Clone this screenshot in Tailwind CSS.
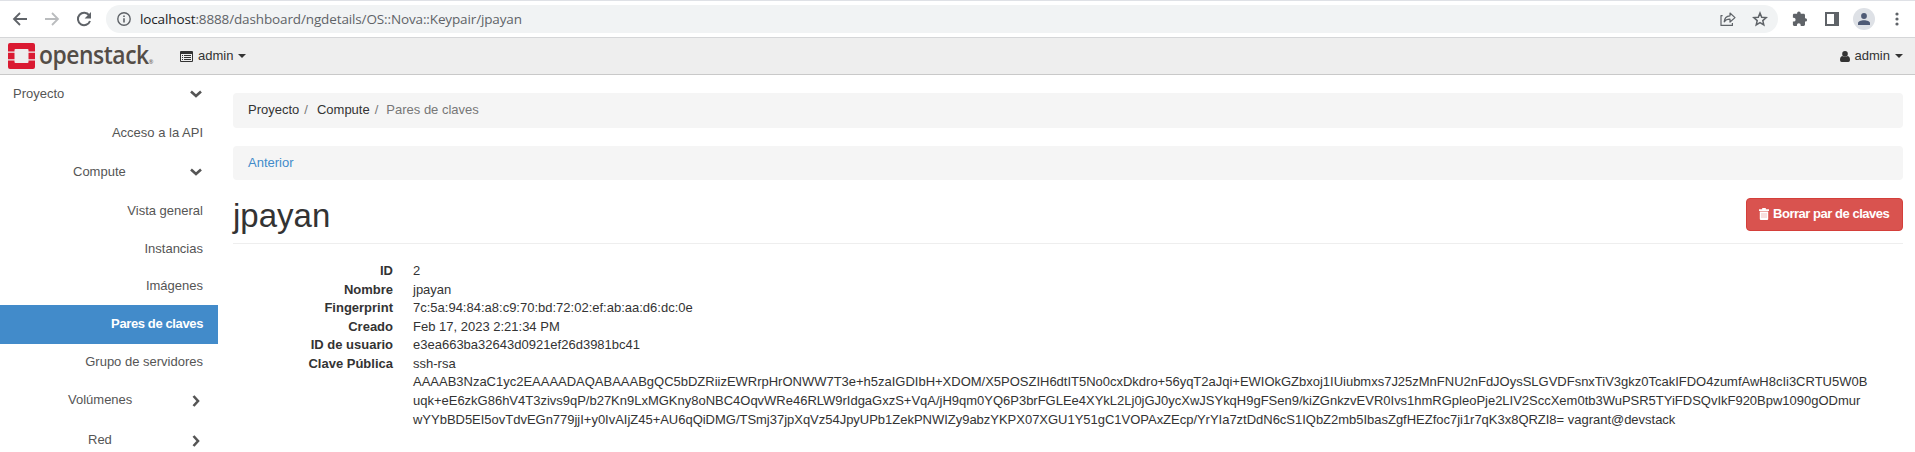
<!DOCTYPE html>
<html lang="es">
<head>
<meta charset="utf-8">
<title>jpayan - OpenStack Dashboard</title>
<script src="https://cdn.jsdelivr.net/npm/@tailwindcss/browser@4"></script>
</head>
<body class="h-[452px] w-[1915px] overflow-hidden bg-white font-['Liberation_Sans',Arial,sans-serif] text-[13px] leading-[18.57px] text-[#333]">
<div class="flex h-[38px] items-center border-t border-b border-t-[#dfe1e6] border-b-[#d5d6d8] bg-white text-[#5f6368]">
  <svg class="ml-3 size-4 shrink-0" viewBox="0 0 16 16" fill="none" stroke="currentColor" stroke-width="1.8"><path d="M15 8H2M8 2L2 8l6 6"/></svg>
  <svg class="ml-4 size-4 shrink-0 text-[#babcbe]" viewBox="0 0 16 16" fill="none" stroke="currentColor" stroke-width="1.8"><path d="M1 8h13M8 2l6 6-6 6"/></svg>
  <svg class="ml-4 size-4 shrink-0" viewBox="0 0 16 16"><path d="M13.2 4.4A6.2 6.2 0 1 0 14 10" fill="none" stroke="currentColor" stroke-width="2"/><path d="M15 1v6.4H8.6z" fill="currentColor"/></svg>
  <div class="ml-[14px] flex h-7 w-[1672px] shrink-0 items-center rounded-full bg-[#f1f3f4]">
    <svg class="ml-[11px] size-[14px]" viewBox="0 0 14 14"><circle cx="7" cy="7" r="6.2" fill="none" stroke="currentColor" stroke-width="1.4"/><path d="M6.2 6.2h1.6v4.3H6.2zM6.2 3.4h1.6V5H6.2z" fill="currentColor"/></svg>
    <span class="ml-[9px] font-['Open_Sans',sans-serif] text-[13.5px] tracking-[-0.13px] whitespace-nowrap"><span class="text-[#202124]">localhost</span>:8888/dashboard/ngdetails/OS::Nova::Keypair/jpayan</span>
    <svg class="mr-[16px] ml-auto h-4 w-4" viewBox="0 0 16 16" fill="none" stroke="currentColor" stroke-width="1.2" stroke-linejoin="round"><path d="M2.6 4.600H1V14.400h11.400V12"/><path d="M4.2 10.8C4.5 7 6.5 5 10 4.8V2l5 4.6-5 4.400V8.200C7.300 8.100 5.500 9 4.200 10.800z"/></svg>
    <svg class="mr-[10px] h-4 w-4" viewBox="0 0 16 16" fill="none" stroke="currentColor" stroke-width="1.5"><path d="M8 2l1.700 4.200 4.500.4-3.400 3 1 4.400L8 11.700l-3.800 2.300 1-4.400-3.400-3 4.500-.4z"/></svg>
  </div>
  <svg class="ml-[14px] size-4 shrink-0" viewBox="0 0 16 16" fill="currentColor"><path d="M13.4 7.2h-.4V4.200c0-.8-.6-1.400-1.400-1.400H8.700V2.200a1.800 1.800 0 0 0-3.600 0v.6H2.200C1.400 2.800.9 3.400.9 4.200v2.600h.8a1.900 1.900 0 0 1 0 3.800H.9v3c0 .8.5 1.400 1.300 1.400h2.700v-.9a1.900 1.900 0 0 1 3.800 0v.9h2.900c.8 0 1.400-.6 1.400-1.400v-3h.4a1.700 1.700 0 0 0 0-3.400z"/></svg>
  <svg class="ml-[17px] h-[14px] w-[14px] shrink-0" viewBox="0 0 14 14"><path fill="currentColor" fill-rule="evenodd" d="M0 0h14v14H0zM2 2v10h7V2z"/></svg>
  <span class="ml-[14px] flex size-[22px] shrink-0 items-center justify-center rounded-full bg-[#dee1e6] text-[#4f5b76]"><svg class="size-3" viewBox="0 0 12 12" fill="currentColor"><circle cx="6" cy="3" r="2.900"/><path d="M0 12V10.200C0 8.300 3 7.300 6 7.300s6 1 6 2.900V12z"/></svg></span>
  <svg class="ml-5 h-[14px] w-[4px] shrink-0" viewBox="0 0 4 14" fill="currentColor"><circle cx="2" cy="2" r="1.600"/><circle cx="2" cy="7" r="1.600"/><circle cx="2" cy="12" r="1.600"/></svg>
</div>
<header class="flex h-[37px] items-center border-b border-[#c9c9c9] bg-[#eee]">
  <svg class="ml-2 h-[26px] w-[27px] shrink-0" viewBox="0 0 27 26" fill="#da1a32"><path d="M2 0H25Q27 0 27 2V8.500H20.500V7Q20.500 6 19.500 6H7.500Q6.500 6 6.500 7V8.500H0V2Q0 0 2 0zM0 17.500H6.500V19Q6.500 20 7.500 20H19.500Q20.500 20 20.500 19V17.500H27V24Q27 26 25 26H2Q0 26 0 24zM0 9.800H6.500V16.200H0zM20.500 9.800H27V16.200H20.500z"/></svg>
  <div class="ml-1 h-[37px] w-[121px] shrink-0"><span class="inline-block origin-left scale-x-[0.915] font-['Open_Sans',sans-serif] text-[25px] leading-[33px] font-semibold tracking-[-0.5px] whitespace-nowrap text-[#544d47]">openstack<span class="text-[6px] font-normal">®</span></span></div>
  <svg class="ml-5 h-[11px] w-[13px] shrink-0" viewBox="0 0 13 11"><path fill="#333" fill-rule="evenodd" d="M1 0h11q1 0 1 1v9q0 1-1 1H1q-1 0-1-1V1q0-1 1-1zM1 3v7h11V3zM2 4h1v1H2zM4 4h7v1H4zM2 6h1v1H2zM4 6h7v1H4zM2 8h1v1H2zM4 8h7v1H4z"/></svg>
  <span class="ml-[5px]">admin</span>
  <span class="ml-[5px] border-x-4 border-t-4 border-x-transparent border-t-[#333]"></span>
  <svg class="ml-auto h-[11px] w-[10px] shrink-0" viewBox="0 0 10 11" fill="#333"><circle cx="5" cy="2.900" r="2.800"/><path d="M2.300 5Q5 7 7.700 5Q10 5.600 10 9Q10 11 8.300 11H1.700Q0 11 0 9Q0 5.600 2.300 5z"/></svg>
  <span class="ml-[5px]">admin</span>
  <span class="mr-3 ml-[5px] border-x-4 border-t-4 border-x-transparent border-t-[#333]"></span>
</header>
<div class="flex">
  <nav class="flex h-[377px] w-[218px] shrink-0 flex-col overflow-hidden text-[#555]">
    <div class="flex h-[38px] shrink-0 items-center justify-between pr-[16px] pl-[13px]"><span>Proyecto</span><svg class="h-2 w-3" viewBox="0 0 12 8"><path d="M1 1.500l5 4.500 5-4.500" fill="none" stroke="#555" stroke-width="2.600"/></svg></div>
    <div class="flex h-[39px] shrink-0 items-center justify-end pt-px pr-[15px]">Acceso a la API</div>
    <div class="flex h-[39px] shrink-0 items-center justify-between pt-px pr-[16px] pl-[73px]"><span>Compute</span><svg class="h-2 w-3" viewBox="0 0 12 8"><path d="M1 1.500l5 4.500 5-4.500" fill="none" stroke="#555" stroke-width="2.600"/></svg></div>
    <div class="flex h-[39px] shrink-0 items-center justify-end pt-px pr-[15px]">Vista general</div>
    <div class="flex h-[37px] shrink-0 items-center justify-end pt-px pr-[15px]">Instancias</div>
    <div class="flex h-[38px] shrink-0 items-center justify-end pr-[15px]">Imágenes</div>
    <div class="flex h-[39px] shrink-0 items-center justify-end bg-[#428bca] pr-[15px] font-bold tracking-[-0.38px] text-white">Pares de claves</div>
    <div class="flex h-[37px] shrink-0 items-center justify-end pr-[15px]">Grupo de servidores</div>
    <div class="flex h-[39px] shrink-0 items-center justify-between pr-[18px] pl-[68px]"><span>Volúmenes</span><svg class="h-3 w-2" viewBox="0 0 8 12"><path d="M1.500 1l4.500 5-4.500 5" fill="none" stroke="#555" stroke-width="2.600"/></svg></div>
    <div class="flex h-[39px] shrink-0 items-center justify-between pt-[2px] pr-[18px] pl-[88px]"><span>Red</span><svg class="h-3 w-2" viewBox="0 0 8 12"><path d="M1.500 1l4.500 5-4.500 5" fill="none" stroke="#555" stroke-width="2.600"/></svg></div>
  </nav>
  <main class="ml-[15px] w-[1670px] pt-[18px]">
    <div class="flex h-[35px] items-center rounded bg-[#f5f5f5] px-[15px]"><span>Proyecto</span><span class="mr-[9px] ml-[5px] text-[#777]">/</span><span>Compute</span><span class="mr-[8px] ml-[5px] text-[#777]">/</span><span class="text-[#777]">Pares de claves</span></div>
    <div class="mt-[18px] flex h-[34px] items-center rounded bg-[#f5f5f5] px-[15px] text-[#428bca]">Anterior</div>
    <div class="flex h-[64px] items-start justify-between border-b border-[#eee] pt-[18px]">
      <h1 class="text-[33px] leading-[35px] font-normal">jpayan</h1>
      <div class="flex h-[33px] w-[157px] items-center rounded border border-[#d43f3a] bg-[#d9534f] pb-px pl-[12px] font-bold tracking-[-0.47px] whitespace-nowrap text-white"><svg class="mr-1 h-[12px] w-[10px] shrink-0" viewBox="0 0 10 12"><path fill="#fff" fill-rule="evenodd" d="M3.200 0h3.600v1.300H10V3H0V1.300h3.200zM.8 3.500h8.400V11q0 1-1 1H1.800q-1 0-1-1z"/><path d="M3 5v5M5 5v5M7 5v5" stroke="#eeb0ae" stroke-width=".8"/></svg>Borrar par de claves</div>
    </div>
    <dl class="mt-[18px] grid grid-cols-[160px_1fr] gap-x-5">
      <dt class="text-right font-bold">ID</dt><dd>2</dd>
      <dt class="text-right font-bold">Nombre</dt><dd>jpayan</dd>
      <dt class="text-right font-bold">Fingerprint</dt><dd>7c:5a:94:84:a8:c9:70:bd:72:02:ef:ab:aa:d6:dc:0e</dd>
      <dt class="text-right font-bold">Creado</dt><dd>Feb 17, 2023 2:21:34 PM</dd>
      <dt class="text-right font-bold">ID de usuario</dt><dd>e3ea663ba32643d0921ef26d3981bc41</dd>
      <dt class="text-right font-bold">Clave Pública</dt>
      <dd class="whitespace-nowrap">ssh-rsa<br><span class="tracking-[-0.01px]">AAAAB3NzaC1yc2EAAAADAQABAAABgQC5bDZRiizEWRrpHrONWW7T3e+h5zaIGDIbH+XDOM/X5POSZIH6dtIT5No0cxDkdro+56yqT2aJqi+EWIOkGZbxoj1IUiubmxs7J25zMnFNU2nFdJOysSLGVDFsnxTiV3gkz0TcakIFDO4zumfAwH8cIi3CRTU5W0B</span><br><span class="tracking-[-0.01px]">uqk+eE6zkG86hV4T3zivs9qP/b27Kn9LxMGKny8oNBC4OqvWRe46RLW9rIdgaGxzS+VqA/jH9qm0YQ6P3brFGLEe4XYkL2Lj0jGJ0ycXwJSYkqH9gFSen9/kiZGnkzvEVR0Ivs1hmRGpleoPje2LIV2SccXem0tb3WuPSR5TYiFDSQvIkF920Bpw1090gODmur</span><br><span class="tracking-[-0.018px]">wYYbBD5EI5ovTdvEGn779jjI+y0IvAIjZ45+AU6qQiDMG/TSmj37jpXqVz54JpyUPb1ZekPNWIZy9abzYKPX07XGU1Y51gC1VOPAxZEcp/YrYIa7ztDdN6cS1IQbZ2mb5IbasZgfHEZfoc7ji1r7qK3x8QRZI8= vagrant@devstack</span></dd>
    </dl>
  </main>
</div>
</body>
</html>
